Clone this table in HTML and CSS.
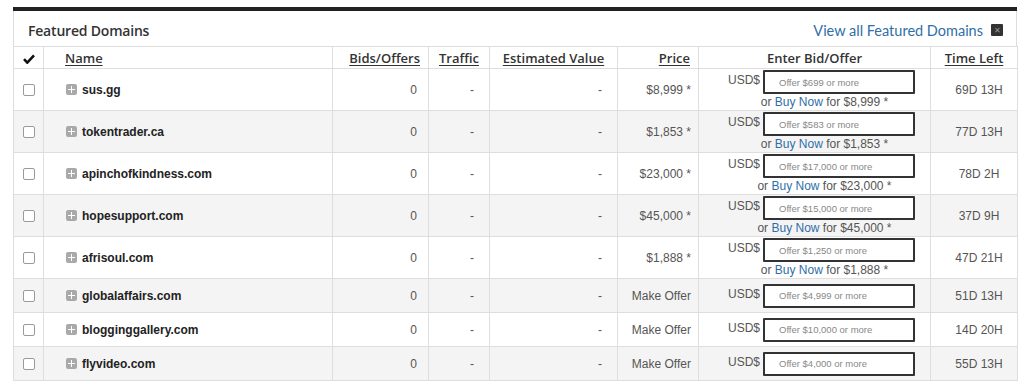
FILE: index.html
```html
<!DOCTYPE html>
<html>
<head>
<meta charset="utf-8">
<link rel="stylesheet" href="styles.css">
</head>
<body>
<div class="panel">
  <div class="panel-head">
    <span class="title">Featured Domains</span>
    <a class="view-all">View all Featured Domains <span class="close">&#x2715;</span></a>
  </div>
  <table class="grid">
    <colgroup>
      <col class="c-check"><col class="c-name"><col class="c-bids"><col class="c-traffic"><col class="c-est"><col class="c-price"><col class="c-bid"><col class="c-time">
    </colgroup>
    <thead>
      <tr>
        <th class="center"><svg class="tick" viewBox="0 0 12 10" width="12" height="10"><path d="M1 5.2 L4.3 8.6 L11 1.4" fill="none" stroke="#111" stroke-width="2.6"/></svg></th>
        <th class="left name-h"><u>Name</u></th>
        <th class="right"><u>Bids/Offers</u></th>
        <th class="center"><u>Traffic</u></th>
        <th class="center"><u>Estimated Value</u></th>
        <th class="right"><u>Price</u></th>
        <th class="center">Enter Bid/Offer</th>
        <th class="center"><u>Time Left</u></th>
      </tr>
    </thead>
    <tbody>
      <tr class="tall">
        <td class="center"><span class="cb"></span></td>
        <td><span class="plus"></span><b class="dom">sus.gg</b></td>
        <td class="num">0</td><td class="dash">-</td><td class="dash">-</td>
        <td class="price">$8,999 *</td>
        <td class="bidcell"><div class="bid"><div class="bidrow"><span class="cur">USD$</span><span class="inp">Offer $699 or more</span></div><div class="buy">or <a>Buy Now</a> for $8,999 *</div></div></td>
        <td class="time">69D 13H</td>
      </tr>
      <tr class="tall alt">
        <td class="center"><span class="cb"></span></td>
        <td><span class="plus"></span><b class="dom">tokentrader.ca</b></td>
        <td class="num">0</td><td class="dash">-</td><td class="dash">-</td>
        <td class="price">$1,853 *</td>
        <td class="bidcell"><div class="bid"><div class="bidrow"><span class="cur">USD$</span><span class="inp">Offer $583 or more</span></div><div class="buy">or <a>Buy Now</a> for $1,853 *</div></div></td>
        <td class="time">77D 13H</td>
      </tr>
      <tr class="tall">
        <td class="center"><span class="cb"></span></td>
        <td><span class="plus"></span><b class="dom">apinchofkindness.com</b></td>
        <td class="num">0</td><td class="dash">-</td><td class="dash">-</td>
        <td class="price">$23,000 *</td>
        <td class="bidcell"><div class="bid"><div class="bidrow"><span class="cur">USD$</span><span class="inp">Offer $17,000 or more</span></div><div class="buy">or <a>Buy Now</a> for $23,000 *</div></div></td>
        <td class="time">78D 2H</td>
      </tr>
      <tr class="tall alt">
        <td class="center"><span class="cb"></span></td>
        <td><span class="plus"></span><b class="dom">hopesupport.com</b></td>
        <td class="num">0</td><td class="dash">-</td><td class="dash">-</td>
        <td class="price">$45,000 *</td>
        <td class="bidcell"><div class="bid"><div class="bidrow"><span class="cur">USD$</span><span class="inp">Offer $15,000 or more</span></div><div class="buy">or <a>Buy Now</a> for $45,000 *</div></div></td>
        <td class="time">37D 9H</td>
      </tr>
      <tr class="tall">
        <td class="center"><span class="cb"></span></td>
        <td><span class="plus"></span><b class="dom">afrisoul.com</b></td>
        <td class="num">0</td><td class="dash">-</td><td class="dash">-</td>
        <td class="price">$1,888 *</td>
        <td class="bidcell"><div class="bid"><div class="bidrow"><span class="cur">USD$</span><span class="inp">Offer $1,250 or more</span></div><div class="buy">or <a>Buy Now</a> for $1,888 *</div></div></td>
        <td class="time">47D 21H</td>
      </tr>
      <tr class="short alt">
        <td class="center"><span class="cb"></span></td>
        <td><span class="plus"></span><b class="dom">globalaffairs.com</b></td>
        <td class="num">0</td><td class="dash">-</td><td class="dash">-</td>
        <td class="price">Make Offer</td>
        <td class="bidcell"><div class="bid"><div class="bidrow"><span class="cur">USD$</span><span class="inp">Offer $4,999 or more</span></div></div></td>
        <td class="time">51D 13H</td>
      </tr>
      <tr class="short">
        <td class="center"><span class="cb"></span></td>
        <td><span class="plus"></span><b class="dom">blogginggallery.com</b></td>
        <td class="num">0</td><td class="dash">-</td><td class="dash">-</td>
        <td class="price">Make Offer</td>
        <td class="bidcell"><div class="bid"><div class="bidrow"><span class="cur">USD$</span><span class="inp">Offer $10,000 or more</span></div></div></td>
        <td class="time">14D 20H</td>
      </tr>
      <tr class="short alt">
        <td class="center"><span class="cb"></span></td>
        <td><span class="plus"></span><b class="dom">flyvideo.com</b></td>
        <td class="num">0</td><td class="dash">-</td><td class="dash">-</td>
        <td class="price">Make Offer</td>
        <td class="bidcell"><div class="bid"><div class="bidrow"><span class="cur">USD$</span><span class="inp">Offer $4,000 or more</span></div></div></td>
        <td class="time">55D 13H</td>
      </tr>
    </tbody>
  </table>
</div>
</body>
</html>
```
FILE: styles.css
```css
html, body { margin: 0; padding: 0; background: #fff; }
body { padding: 7px 0 0 13px; font-family: "Liberation Sans", Arial, sans-serif; color: #333; }

.panel {
  width: 1004px;
  border-top: 4px solid #222;
}
.panel-head {
  box-sizing: border-box;
  height: 35px;
  display: flex;
  align-items: center;
  justify-content: space-between;
  padding: 3px 13px 0 14px;
  border-left: 1px solid #ddd;
  border-right: 1px solid #ddd;
  font-family: "Open Sans", sans-serif;
}
.title { font-size: 14px; font-weight: 600; color: #333; letter-spacing: -0.2px; }
.view-all { font-family: Lato, sans-serif; font-size: 14.5px; color: #2f6fa7; display: flex; align-items: center; gap: 8px; }
.close {
  display: inline-flex; align-items: center; justify-content: center;
  width: 12px; height: 12px; background: #333; color: #999;
  font-size: 8px; border-radius: 1px; line-height: 1;
}

.grid {
  width: 1004px;
  border-collapse: collapse;
  table-layout: fixed;
}
.c-check { width: 30px; }
.c-name { width: 289px; }
.c-bids { width: 96px; }
.c-traffic { width: 61px; }
.c-est { width: 128px; }
.c-price { width: 81px; }
.c-bid { width: 232px; }
.c-time { width: 87px; }

.grid th, .grid td { border: 1px solid #dedede; padding: 0; }
.grid th {
  height: 21px;
  font-family: "Open Sans", sans-serif;
  font-size: 13px;
  font-weight: 600;
  color: #333;
  padding: 0 8px;
  white-space: nowrap;
}
.grid th u { text-decoration-thickness: 1px; text-underline-offset: 2px; }
.grid th.center { text-align: center; }
.grid th.left { text-align: left; }
.grid th.right { text-align: right; }
.grid th.name-h { padding-left: 21px; }
.tick { display: block; margin: 3px auto 0; }

tr.tall td { height: 41px; }
tr.short td { height: 33px; }
tr.alt td { background: #f4f4f4; }

.grid td { font-size: 12px; color: #555; }
td.center { text-align: center; }
.cb {
  display: inline-block; width: 10px; height: 10px;
  border: 1px solid #9a9a9a; border-radius: 2px; background: #fff;
  vertical-align: middle;
}
.plus {
  display: inline-block; width: 11px; height: 11px; border-radius: 2px;
  background: #a9a9a9; margin: 0 5px 0 22px; vertical-align: -1px; position: relative;
}
.plus::before, .plus::after { content: ""; position: absolute; background: #fff; }
.plus::before { left: 2px; right: 2px; top: 5px; height: 1px; }
.plus::after { top: 2px; bottom: 2px; left: 5px; width: 1px; }
.dom { font-size: 12px; font-weight: bold; color: #222; }
td.num { text-align: right; padding-right: 11px; }
td.dash { text-align: right; padding-right: 15px; }
td.price { text-align: right; padding-right: 7px; }
td.time { text-align: center; padding-left: 10px; }

td.bidcell { text-align: center; }
.bid { display: inline-flex; flex-direction: column; align-items: center; margin-left: 14px; }
.bidrow { display: flex; align-items: flex-start; gap: 3px; }
.cur { font-size: 12px; color: #555; margin-top: 3px; }
.inp {
  width: 134px; height: 20px; box-sizing: content-box;
  border: 2px solid #333; border-radius: 1px; background: #fff;
  font-size: 9.5px; color: #888; text-align: left; padding: 0 0 0 14px;
  display: flex; align-items: center;
}
.buy { font-size: 12px; color: #555; margin-top: 1px; line-height: 14px; padding-left: 6px; }
.buy a { color: #2f6fa7; }
```
